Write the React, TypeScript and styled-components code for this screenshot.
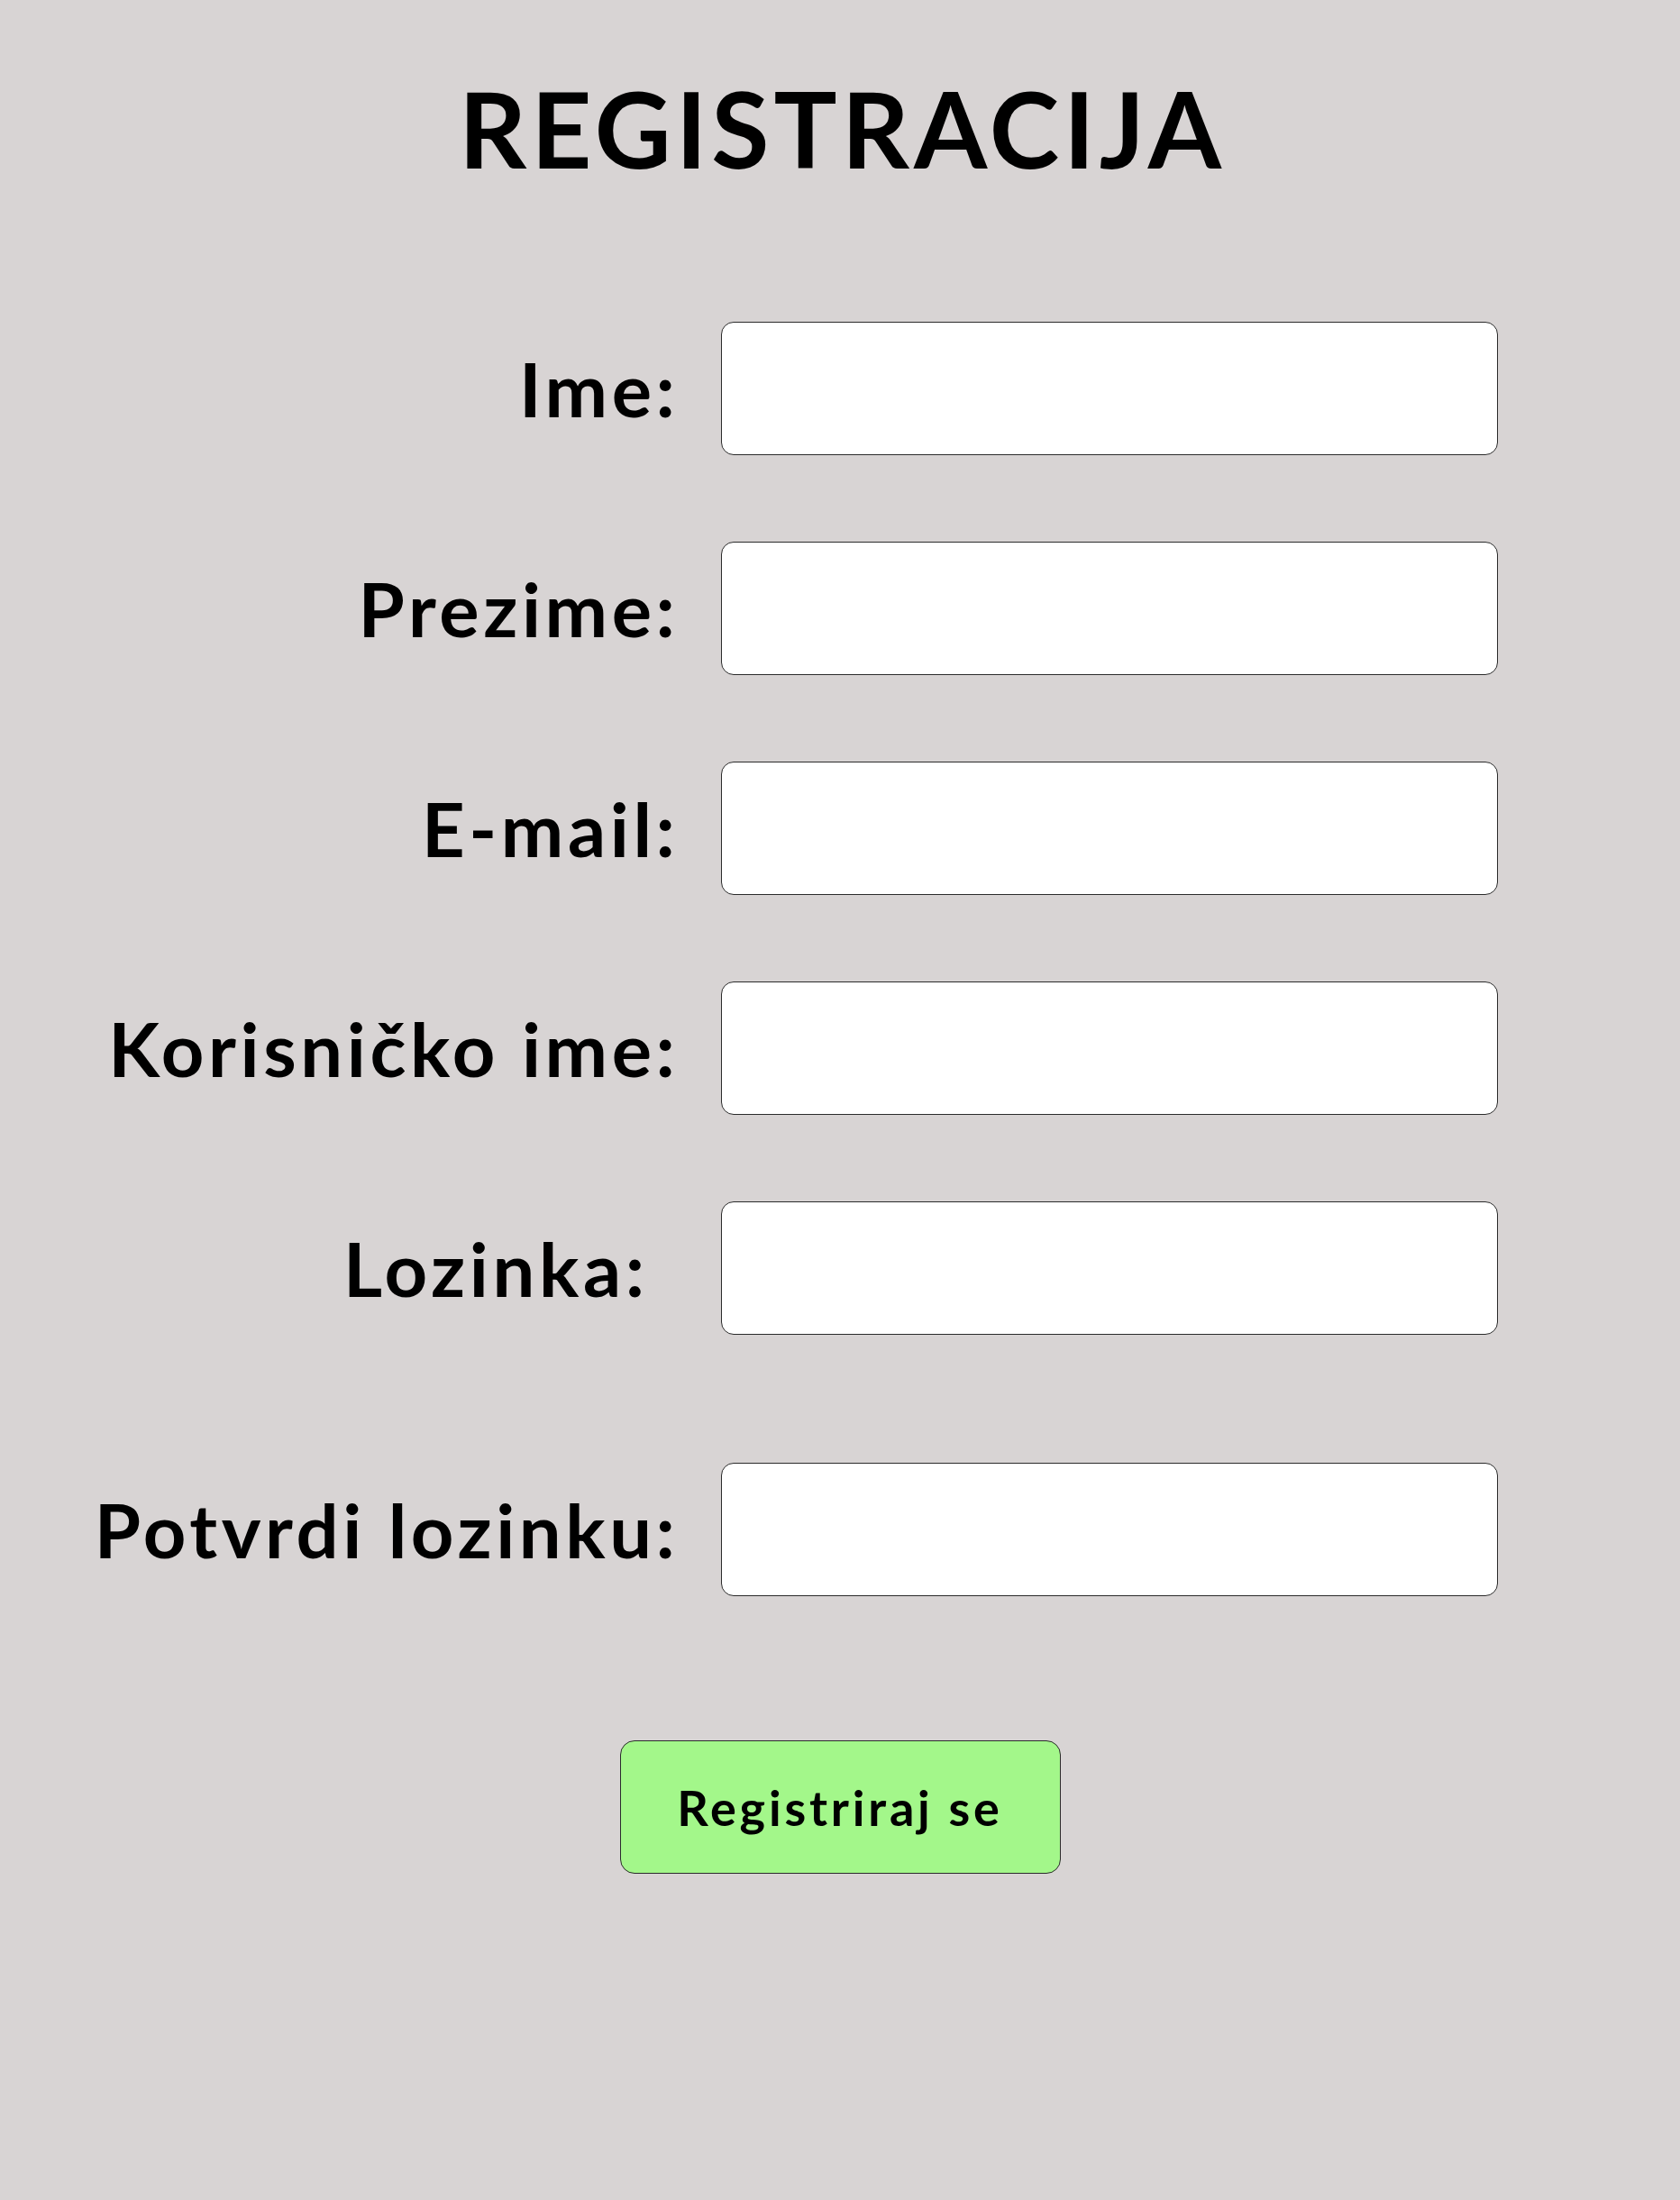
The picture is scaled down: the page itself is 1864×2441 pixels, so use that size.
import React from "react";
import styled, { createGlobalStyle } from "styled-components";

const Global = createGlobalStyle`
  html, body { margin: 0; padding: 0; }
  body { background: #d8d4d4; font-family: "Lato", "Noto Sans", sans-serif; color: #000; }
`;

const Page = styled.div`
  min-height: 2441px;
  background: #d8d4d4;
  display: flex;
  flex-direction: column;
  align-items: center;
  padding-top: 72px;
  box-sizing: border-box;
`;

const Title = styled.h1`
  margin: 0 -5px 0 0;
  font-family: "Lato", sans-serif;
  font-weight: 700;
  font-size: 117px;
  line-height: 140px;
  letter-spacing: 5px;
`;

const Form = styled.form`
  align-self: stretch;
  display: flex;
  flex-direction: column;
  gap: 96px;
  margin-top: 145px;
`;

const Row = styled.div<{ $extraTop?: number }>`
  display: grid;
  grid-template-columns: 749px 862px;
  column-gap: 51px;
  align-items: center;
  margin-top: ${(p) => p.$extraTop ?? 0}px;
`;

const Label = styled.label<{ $shift?: number }>`
  justify-self: end;
  font-family: "Lato", sans-serif;
  font-weight: 700;
  font-size: 83px;
  line-height: 1;
  letter-spacing: 4.6px;
  margin-right: ${(p) => (p.$shift ?? 0) - 4.6}px;
  white-space: nowrap;
`;

const Input = styled.input`
  box-sizing: border-box;
  width: 862px;
  height: 148px;
  background: #fff;
  border: 1px solid #2b2b2b;
  border-radius: 14px;
  font-size: 40px;
  padding: 0 20px;
  outline: none;
`;

const Button = styled.button`
  margin-top: 160px;
  width: 489px;
  height: 148px;
  box-sizing: border-box;
  background: #a3f78a;
  border: 1px solid #2b2b2b;
  border-radius: 16px;
  font-family: "Lato", sans-serif;
  font-weight: 700;
  font-size: 54px;
  letter-spacing: 3.8px;
  color: #000;
  cursor: pointer;
`;

const fields: { label: string; type: string; shift?: number; extraTop?: number }[] = [
  { label: "Ime:", type: "text" },
  { label: "Prezime:", type: "text" },
  { label: "E-mail:", type: "email" },
  { label: "Korisničko ime:", type: "text" },
  { label: "Lozinka:", type: "password", shift: 34 },
  { label: "Potvrdi lozinku:", type: "password", extraTop: 46 },
];

export default function App() {
  return (
    <>
      <Global />
      <Page>
        <Title>REGISTRACIJA</Title>
        <Form onSubmit={(e) => e.preventDefault()}>
          {fields.map((f) => (
            <Row key={f.label} $extraTop={f.extraTop}>
              <Label $shift={f.shift}>{f.label}</Label>
              <Input type={f.type} />
            </Row>
          ))}
        </Form>
        <Button type="button">Registriraj se</Button>
      </Page>
    </>
  );
}
